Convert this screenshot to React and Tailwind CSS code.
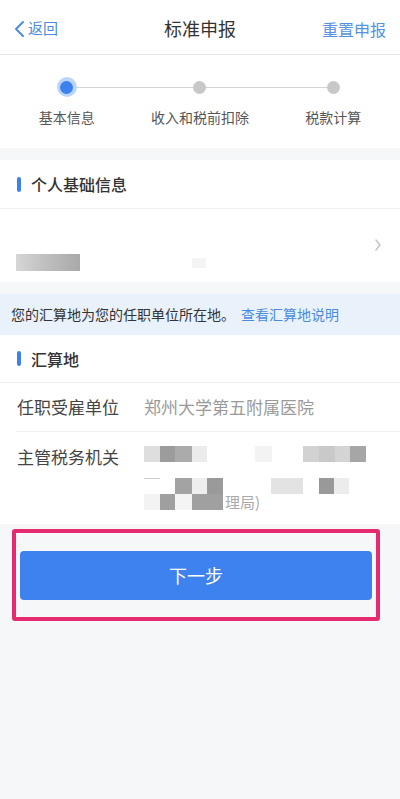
import React from "react";

const B = ({ w, c }) => <div className={`h-4 ${w} ${c}`} />;

export default function App() {
  return (
    <div
      className="w-[400px] min-h-[799px] bg-[#f6f7f9] text-[#333]"
      style={{ fontFamily: '"Noto Sans CJK SC", "Noto Sans", sans-serif' }}
    >
      {/* Header */}
      <div className="h-[55px] bg-white border-b border-[#e6e6e6] flex items-center justify-between px-[14px] relative">
        <div className="flex items-center text-[#4a8be0] text-[15px] pt-[3px]">
          <svg width="12" height="18" viewBox="0 0 12 18" className="mr-[2px]">
            <polyline points="9,2 2,9 9,16" fill="none" stroke="#4a8be0" strokeWidth="2" strokeLinecap="round" strokeLinejoin="round" />
          </svg>
          <span>返回</span>
        </div>
        <div className="absolute left-0 right-0 text-center text-[18px] text-[#333] pt-[3px] pointer-events-none">标准申报</div>
        <div className="text-[16px] text-[#5592e2] pt-[3px]">重置申报</div>
      </div>

      {/* Steps */}
      <div className="bg-white h-[93px] relative">
        <div className="absolute left-[67px] right-[67px] top-[32px] h-px bg-[#d4d4d4]" />
        <div className="grid grid-cols-3 relative">
          <div className="flex flex-col items-center">
            <div className="mt-[22px] w-[20px] h-[20px] rounded-full bg-[#bcd5f7] flex items-center justify-center">
              <div className="w-[13px] h-[13px] rounded-full bg-[#3b82ee]" />
            </div>
            <div className="mt-[10px] text-[14px] text-[#555]">基本信息</div>
          </div>
          <div className="flex flex-col items-center">
            <div className="mt-[22px] w-[20px] h-[20px] flex items-center justify-center">
              <div className="w-[13px] h-[13px] rounded-full bg-[#c8c8c8]" />
            </div>
            <div className="mt-[10px] text-[14px] text-[#555]">收入和税前扣除</div>
          </div>
          <div className="flex flex-col items-center">
            <div className="mt-[22px] w-[20px] h-[20px] flex items-center justify-center">
              <div className="w-[13px] h-[13px] rounded-full bg-[#c8c8c8]" />
            </div>
            <div className="mt-[10px] text-[14px] text-[#555]">税款计算</div>
          </div>
        </div>
      </div>

      {/* Section 1 */}
      <div className="mt-[12px] bg-white">
        <div className="h-[49px] flex items-center px-[17px] border-b border-[#f0f0f0]">
          <div className="w-[4px] h-[15px] rounded-full bg-[#3b82ee]" />
          <div className="ml-[10px] text-[16px] font-medium text-[#333]">个人基础信息</div>
        </div>
        <div className="h-[73px] flex items-center justify-between pl-[16px] pr-[16px]">
          <div className="mt-[34px] flex items-center">
            <div className="h-[17px] w-[64px] bg-gradient-to-r from-[#d6d6d6] via-[#bdbdbd] to-[#a9a9a9]" />
            <div className="ml-[112px] h-[10px] w-[14px] bg-[#f4f4f4]" />
          </div>
          <svg width="8" height="12" viewBox="0 0 8 12" className="-mt-[2px] mr-[2px]">
            <polyline points="2,1 6,6 2,11" fill="none" stroke="#c4c4c4" strokeWidth="1.5" strokeLinecap="round" strokeLinejoin="round" />
          </svg>
        </div>
      </div>

      {/* Info bar */}
      <div className="mt-[12px] h-[41px] bg-[#e9f1fb] flex items-center pl-[11px] text-[14px]">
        <span className="text-[#333]">您的汇算地为您的任职单位所在地。</span>
        <span className="ml-[6px] text-[#4a8be0]">查看汇算地说明</span>
      </div>

      {/* Section 2 */}
      <div className="bg-white">
        <div className="h-[48px] flex items-center px-[17px] border-b border-[#f0f0f0]">
          <div className="w-[4px] h-[15px] rounded-full bg-[#3b82ee]" />
          <div className="ml-[10px] text-[16px] font-medium text-[#333]">汇算地</div>
        </div>
        <div className="ml-[16px] h-[49px] flex items-center border-b border-[#f0f0f0]">
          <div className="w-[128px] text-[17px] text-[#444] pl-[1px]">任职受雇单位</div>
          <div className="text-[17px] text-[#9a9a9a]">郑州大学第五附属医院</div>
        </div>
        <div className="ml-[16px] flex pt-[12px] pb-[14px]">
          <div className="w-[128px] text-[17px] text-[#444] pl-[1px] leading-[26px]">主管税务机关</div>
          <div className="flex flex-col pt-[2px]">
            <div className="flex">
              <B w="w-[16px]" c="bg-[#dedede]" />
              <B w="w-[15px]" c="bg-[#9c9c9c]" />
              <B w="w-[17px]" c="bg-[#ababab]" />
              <B w="w-[15px]" c="bg-[#ebebeb]" />
              <B w="w-[48px]" c="bg-white" />
              <B w="w-[17px]" c="bg-[#f3f3f3]" />
              <B w="w-[31px]" c="bg-white" />
              <B w="w-[16px]" c="bg-[#d2d2d2]" />
              <B w="w-[16px]" c="bg-[#c9c9c9]" />
              <B w="w-[15px]" c="bg-[#d4d4d4]" />
              <B w="w-[16px]" c="bg-[#a6a6a6]" />
            </div>
            <div className="flex mt-[16px]">
              <div className="h-4 w-[16px] border-t border-[#cfcfcf]" />
              <B w="w-[15px]" c="bg-white" />
              <B w="w-[17px]" c="bg-[#a3a3a3]" />
              <B w="w-[15px]" c="bg-[#eeeeee]" />
              <B w="w-[16px]" c="bg-[#9a9a9a]" />
              <B w="w-[48px]" c="bg-white" />
              <B w="w-[32px]" c="bg-[#e3e3e3]" />
              <B w="w-[16px]" c="bg-white" />
              <B w="w-[15px]" c="bg-[#999999]" />
              <B w="w-[15px]" c="bg-[#ececec]" />
            </div>
            <div className="flex items-center">
              <B w="w-[16px]" c="bg-[#f3f3f3]" />
              <B w="w-[15px]" c="bg-[#9f9f9f]" />
              <B w="w-[17px]" c="bg-[#f4f4f4]" />
              <B w="w-[31px]" c="bg-[#a0a0a0]" />
              <span className="ml-[2px] text-[15px] leading-[16px] text-[#aaa]">理局)</span>
            </div>
          </div>
        </div>
      </div>

      {/* Button area */}
      <div className="mt-[5px] ml-[12px] w-[368px] h-[92px] border-[4px] border-[#e52a6f] rounded-[3px] pt-[18px] px-[4px]">
        <div className="h-[49px] rounded-[4px] bg-[#3d82ee] flex items-center justify-center text-white text-[18px]">
          下一步
        </div>
      </div>
    </div>
  );
}
